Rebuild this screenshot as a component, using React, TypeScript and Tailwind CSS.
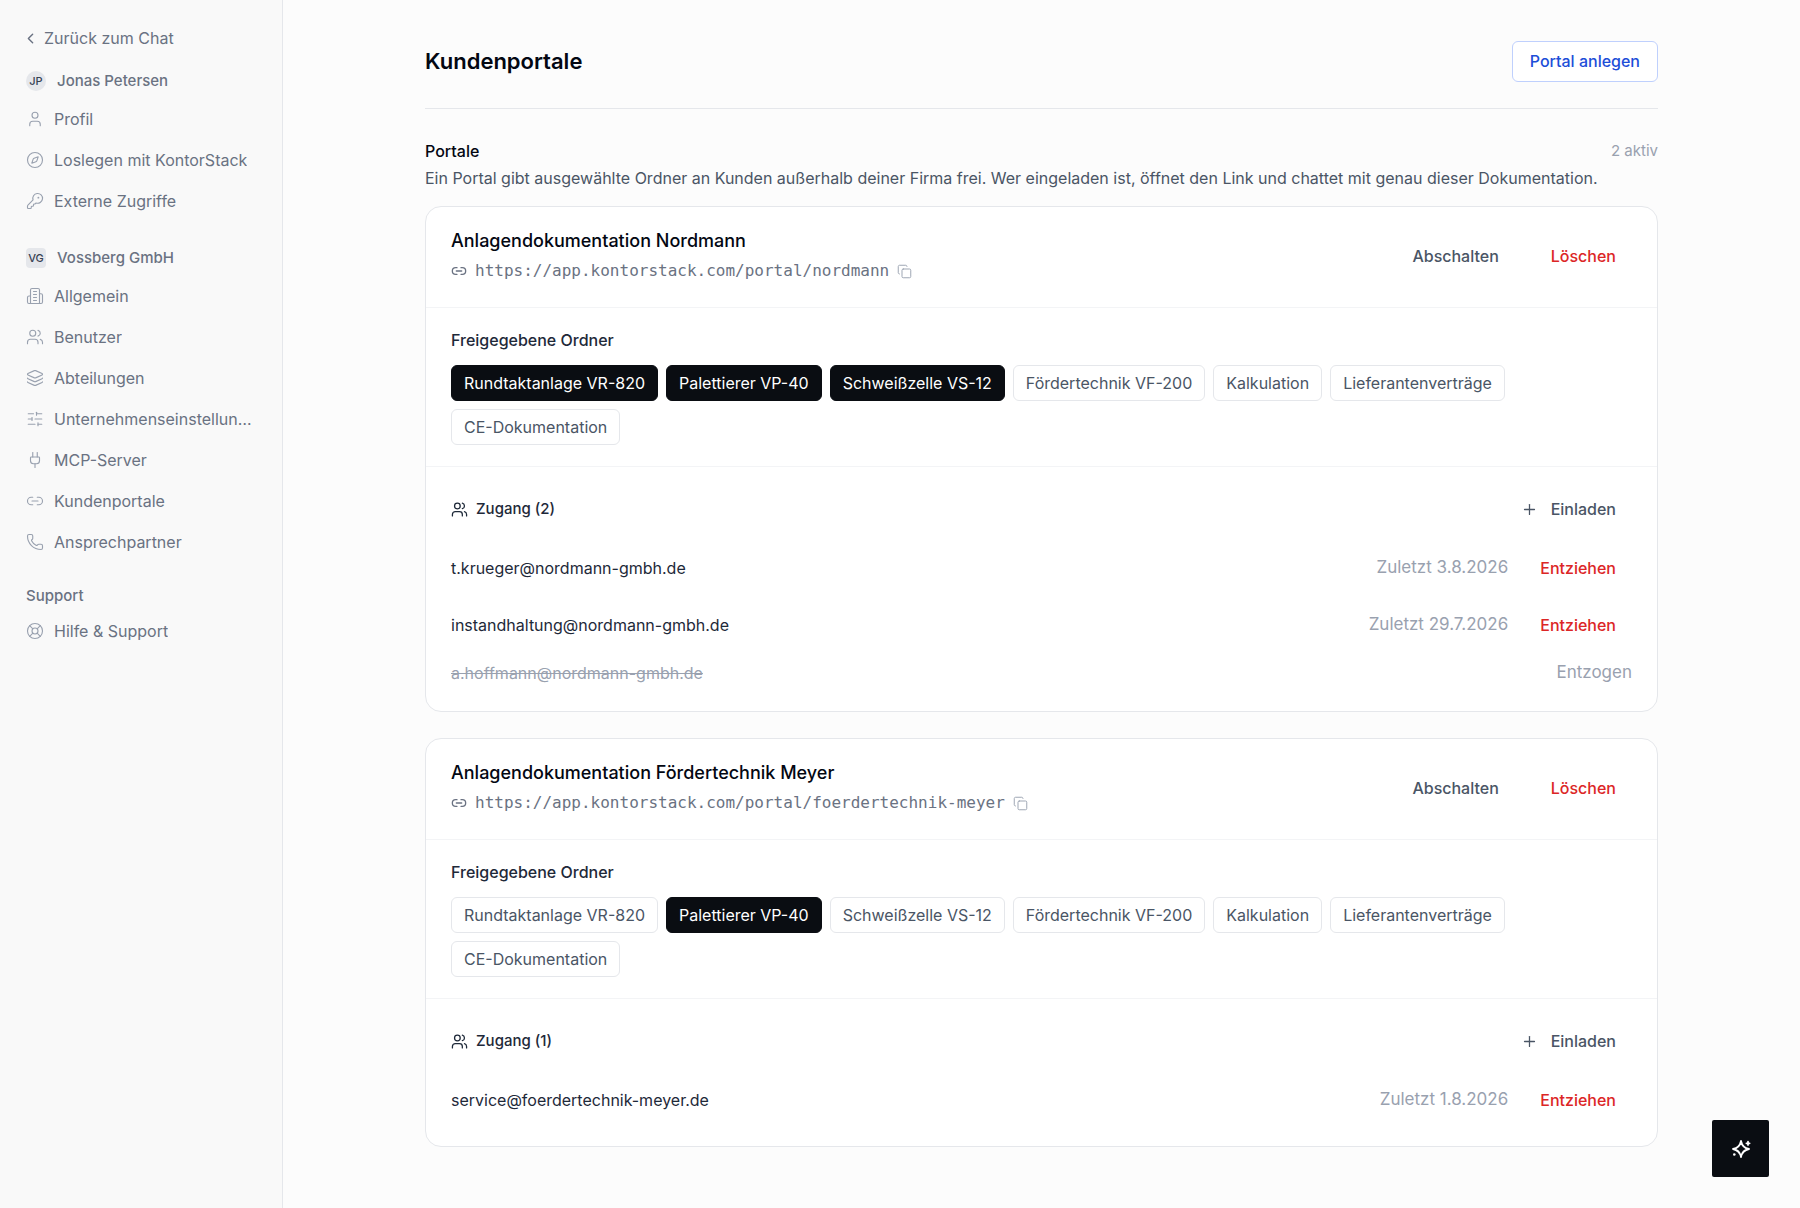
import type { ComponentType, ReactNode } from 'react';
import {
  ChevronLeft,
  Compass,
  Copy,
  KeyRound,
  Layers,
  LifeBuoy,
  Link2,
  Phone,
  Plug,
  Plus,
  SlidersHorizontal,
  User,
  Users,
} from 'lucide-react';

type IconProps = { className?: string; strokeWidth?: number };

function OfficeBuilding({ className, strokeWidth = 2 }: IconProps) {
  return (
    <svg
      viewBox="0 0 24 24"
      fill="none"
      stroke="currentColor"
      strokeWidth={strokeWidth}
      strokeLinecap="round"
      strokeLinejoin="round"
      className={className}
      aria-hidden="true"
    >
      <path d="M6 22V4a2 2 0 0 1 2-2h8a2 2 0 0 1 2 2v18Z" />
      <path d="M6 12H4a2 2 0 0 0-2 2v6a2 2 0 0 0 2 2h2" />
      <path d="M18 9h2a2 2 0 0 1 2 2v9a2 2 0 0 1-2 2h-2" />
      <path d="M10 6h4M10 10h4M10 14h4M10 18h4" />
    </svg>
  );
}

function AssistantStar({ className }: IconProps) {
  return (
    <svg
      viewBox="0 0 20 20"
      fill="none"
      stroke="currentColor"
      strokeWidth={1.8}
      strokeLinecap="round"
      strokeLinejoin="round"
      className={className}
      aria-hidden="true"
    >
      <path d="M10 2c.9 4.9 3.1 7.1 8 8-4.900.9-7.100 3.100-8 8-.9-4.900-3.100-7.100-8-8 4.900-.9 7.100-3.100 8-8Z" />
      <path d="M17 2.700v3.200M15.400 4.300h3.200" />
      <circle cx="3.300" cy="15.500" r="1.300" fill="currentColor" stroke="none" />
    </svg>
  );
}

type NavEntry = { label: string; icon: ComponentType<IconProps> };

const accountNav: NavEntry[] = [
  { label: 'Profil', icon: User },
  { label: 'Loslegen mit KontorStack', icon: Compass },
  { label: 'Externe Zugriffe', icon: KeyRound },
];

const companyNav: NavEntry[] = [
  { label: 'Allgemein', icon: OfficeBuilding },
  { label: 'Benutzer', icon: Users },
  { label: 'Abteilungen', icon: Layers },
  { label: 'Unternehmenseinstellungen', icon: SlidersHorizontal },
  { label: 'MCP-Server', icon: Plug },
  { label: 'Kundenportale', icon: Link2 },
  { label: 'Ansprechpartner', icon: Phone },
];

const supportNav: NavEntry[] = [{ label: 'Hilfe & Support', icon: LifeBuoy }];

const folders = [
  'Rundtaktanlage VR-820',
  'Palettierer VP-40',
  'Schweißzelle VS-12',
  'Fördertechnik VF-200',
  'Kalkulation',
  'Lieferantenverträge',
  'CE-Dokumentation',
];

type Member = { email: string; lastSeen?: string };
type Portal = { name: string; url: string; shared: string[]; members: Member[] };

const portals: Portal[] = [
  {
    name: 'Anlagendokumentation Nordmann',
    url: 'https://app.kontorstack.com/portal/nordmann',
    shared: ['Rundtaktanlage VR-820', 'Palettierer VP-40', 'Schweißzelle VS-12'],
    members: [
      { email: 't.krueger@nordmann-gmbh.de', lastSeen: '3.8.2026' },
      { email: 'instandhaltung@nordmann-gmbh.de', lastSeen: '29.7.2026' },
      { email: 'a.hoffmann@nordmann-gmbh.de' },
    ],
  },
  {
    name: 'Anlagendokumentation Fördertechnik Meyer',
    url: 'https://app.kontorstack.com/portal/foerdertechnik-meyer',
    shared: ['Palettierer VP-40'],
    members: [{ email: 'service@foerdertechnik-meyer.de', lastSeen: '1.8.2026' }],
  },
];

function NavList({ entries }: { entries: NavEntry[] }) {
  return (
    <ul>
      {entries.map(({ label, icon: Icon }) => (
        <li key={label}>
          <a href="#" className="flex h-[41px] items-center gap-[10px] text-[16px] text-gray-500">
            <Icon className="size-[18px] shrink-0 text-gray-400" strokeWidth={1.5} />
            <span className="truncate">{label}</span>
          </a>
        </li>
      ))}
    </ul>
  );
}

function GroupTitle({ badge, round, children }: { badge: string; round?: boolean; children: ReactNode }) {
  return (
    <h2 className="flex h-[34px] items-center gap-[11px] text-[15px] font-medium text-gray-500">
      <span
        className={
          'flex size-5 shrink-0 items-center justify-center bg-gray-200 text-[11px] font-medium text-gray-700 ' +
          (round ? 'rounded-full' : 'rounded')
        }
      >
        {badge}
      </span>
      {children}
    </h2>
  );
}

function Sidebar() {
  return (
    <aside className="w-[283px] shrink-0 border-r border-gray-200 bg-[#f9f9f9] pr-7 pl-[26px]">
      <a href="#" className="mt-5 flex h-9 items-center gap-[5px] text-[16px] text-gray-500">
        <ChevronLeft className="-mx-1 size-[17px] shrink-0" strokeWidth={2} />
        <span className="pl-1">Zurück zum Chat</span>
      </a>
      <nav aria-label="Einstellungen">
        <div className="mt-2">
          <GroupTitle badge="JP" round>
            Jonas Petersen
          </GroupTitle>
          <NavList entries={accountNav} />
        </div>
        <div className="mt-5">
          <GroupTitle badge="VG">Vossberg GmbH</GroupTitle>
          <NavList entries={companyNav} />
        </div>
        <div className="mt-5">
          <h2 className="flex h-7 items-center text-[15px] font-medium text-gray-500">Support</h2>
          <NavList entries={supportNav} />
        </div>
      </nav>
    </aside>
  );
}

function FolderChip({ label, active }: { label: string; active: boolean }) {
  return (
    <button
      type="button"
      aria-pressed={active}
      className={
        'h-9 rounded-md border px-3 text-[16px] ' +
        (active ? 'border-[#0a0d12] bg-[#0a0d12] text-white' : 'border-gray-200 bg-white text-gray-600')
      }
    >
      {label}
    </button>
  );
}

function MemberRow({ email, lastSeen }: Member) {
  if (!lastSeen) {
    return (
      <li className="flex h-10 items-center justify-between text-gray-400">
        <span className="text-[16px] line-through">{email}</span>
        <span className="text-[17px]">Entzogen</span>
      </li>
    );
  }
  return (
    <li className="flex h-[57px] items-center justify-between">
      <span className="text-[16px] text-gray-800">{email}</span>
      <span className="flex items-center gap-4">
        <span className="text-[17px] text-gray-400">Zuletzt {lastSeen}</span>
        <button type="button" className="h-10 px-4 text-[16px] font-medium text-[#dc2626]">
          Entziehen
        </button>
      </span>
    </li>
  );
}

function PortalCard({ name, url, shared, members }: Portal) {
  const active = members.filter((member) => member.lastSeen).length;
  return (
    <article className="rounded-2xl border border-gray-200 bg-white">
      <header className="flex items-center justify-between border-b border-gray-100 px-[25px] pt-5 pb-[22px]">
        <div>
          <h3 className="text-[18px] leading-7 font-medium text-gray-950">{name}</h3>
          <div className="mt-0.5 flex h-7 items-center gap-2 text-gray-500">
            <Link2 className="size-4" strokeWidth={2} />
            <a href="#" className="font-['DejaVu_Sans_Mono',monospace] text-[16px]">
              {url}
            </a>
            <button type="button" aria-label="Link kopieren" className="text-gray-400">
              <Copy className="size-[15px]" strokeWidth={1.5} />
            </button>
          </div>
        </div>
        <div className="flex gap-5 text-[16px] font-medium">
          <button type="button" className="h-10 px-4 text-gray-600">
            Abschalten
          </button>
          <button type="button" className="h-10 px-4 text-[#dc2626]">
            Löschen
          </button>
        </div>
      </header>
      <section className="border-b border-gray-100 px-[25px] pt-5 pb-[21px]">
        <h4 className="text-[16px] leading-6 font-medium text-gray-800">Freigegebene Ordner</h4>
        <div className="mt-[13px] flex max-w-[1120px] flex-wrap gap-2">
          {folders.map((folder) => (
            <FolderChip key={folder} label={folder} active={shared.includes(folder)} />
          ))}
        </div>
      </section>
      <section className="px-[25px] pt-5 pb-[18px]">
        <div className="mb-2 flex items-center justify-between">
          <h4 className="flex items-center gap-2 text-[15px] font-medium text-gray-800">
            <Users className="size-[17px]" strokeWidth={1.8} />
            Zugang ({active})
          </h4>
          <button type="button" className="flex h-11 items-center gap-[13px] px-4 text-[16px] font-medium text-gray-600">
            <Plus className="size-[17px]" strokeWidth={1.8} />
            Einladen
          </button>
        </div>
        <ul>
          {members.map((member) => (
            <MemberRow key={member.email} {...member} />
          ))}
        </ul>
      </section>
    </article>
  );
}

export default function App() {
  return (
    <div className="flex min-h-screen bg-[#fcfcfc] font-['Inter',sans-serif]">
      <Sidebar />
      <main className="min-w-0 flex-1 px-10">
        <div className="mx-auto max-w-[1233px] pt-[41px] pb-[59px]">
          <header className="flex items-center justify-between border-b border-gray-200 pb-[26px]">
            <h1 className="text-[22px] font-semibold text-gray-950">Kundenportale</h1>
            <button
              type="button"
              className="h-[41px] rounded-md border border-[#bfd0fd] bg-white px-[17px] pb-0.5 text-[16px] font-medium text-[#1d4ed8]"
            >
              Portal anlegen
            </button>
          </header>
          <section className="pt-7">
            <div className="flex items-center justify-between">
              <h2 className="text-[16px] leading-7 font-medium text-gray-950">Portale</h2>
              <span className="text-[15px] text-gray-400">2 aktiv</span>
            </div>
            <p className="text-[16px] leading-[26px] text-gray-600">
              Ein Portal gibt ausgewählte Ordner an Kunden außerhalb deiner Firma frei. Wer eingeladen ist, öffnet den
              Link und chattet mit genau dieser Dokumentation.
            </p>
            <div className="mt-[15px] flex flex-col gap-[26px]">
              {portals.map((portal) => (
                <PortalCard key={portal.name} {...portal} />
              ))}
            </div>
          </section>
        </div>
      </main>
      <button
        type="button"
        aria-label="Assistent öffnen"
        className="fixed right-[31px] bottom-[31px] flex size-[57px] items-center justify-center rounded-xs bg-[#0a0d12] text-white"
      >
        <AssistantStar className="size-5" />
      </button>
    </div>
  );
}
